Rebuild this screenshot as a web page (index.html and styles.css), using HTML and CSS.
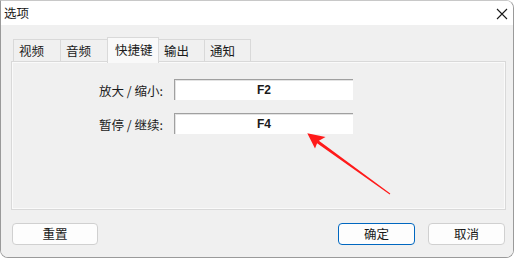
FILE: index.html
```html
<!DOCTYPE html>
<html lang="zh-CN">
<head>
<meta charset="UTF-8">
<title>选项</title>
<link rel="stylesheet" href="styles.css">
</head>
<body>
<div class="window">
    <div class="titlebar">
        <span class="title">选项</span>
        <span class="close">
            <svg width="12" height="12" viewBox="0 0 12 12"><path d="M1 1L11 11M11 1L1 11" stroke="#1a1a1a" stroke-width="1.1" fill="none"/></svg>
        </span>
    </div>
    <div class="content">
        <div class="tabs">
            <div class="tab">视频</div>
            <div class="tab">音频</div>
            <div class="tab active">快捷键</div>
            <div class="tab">输出</div>
            <div class="tab">通知</div>
        </div>
        <div class="panel">
            <div class="form">
                <label class="key-label">放大 / 缩小:</label>
                <div class="key-box">F2</div>
                <label class="key-label">暂停 / 继续:</label>
                <div class="key-box">F4</div>
            </div>
        </div>
        <div class="footer">
            <button class="btn reset">重置</button>
            <div class="right-btns">
                <button class="btn primary">确定</button>
                <button class="btn">取消</button>
            </div>
        </div>
    </div>
</div>

<svg class="arrow" width="517" height="259" viewBox="0 0 517 259">
    <polygon points="307.3,133.3 325.5,137 318.9,140.8 390.3,193.6 389.7,194.4 317.1,143.2 315,148.6" fill="#ff1a1a"/>
</svg>
</body>
</html>
```

FILE: styles.css
```css
body {
    margin: 0;
    background: #ffffff;
    font-family: "Noto Sans CJK SC", "Noto Sans", sans-serif;
    font-size: 12px;
    color: #1a1a1a;
}
.window {
    width: 514px;
    height: 258px;
    box-sizing: border-box;
    border: 1px solid #9a9a9a;
    border-top-color: #c8c8c8;
    border-radius: 0 8px 8px 8px;
    overflow: hidden;
    display: flex;
    flex-direction: column;
}
.titlebar {
    height: 24px;
    flex: none;
    background: #ffffff;
    display: flex;
    align-items: center;
    justify-content: space-between;
    padding: 0 5px 0 3px;
}
.title {
    font-size: 12.5px;
    line-height: 14px;
}
.close {
    display: flex;
    margin-top: 1px;
}
.content {
    flex: 1;
    background: #f0f0f0;
    padding: 12px 7px 11px 10px;
    display: flex;
    flex-direction: column;
}
.tabs {
    display: flex;
    height: 24px;
    align-items: flex-end;
    padding-left: 2px;
    position: relative;
    z-index: 1;
}
.tab {
    width: 48px;
    height: 22px;
    box-sizing: border-box;
    border: 1px solid #d9d9d9;
    border-bottom: none;
    margin-right: -1px;
    background: #f0f0f0;
    padding: 4px 0 0 5px;
    font-size: 12.5px;
    line-height: 14px;
}
.tab.active {
    width: 52px;
    height: 26px;
    margin: 0 -1px -2px 0;
    background: #f9f9f9;
    padding: 5px 0 0 7px;
    position: relative;
    z-index: 2;
}
.tab.active + .tab,
.tab.active + .tab + .tab {
    width: 47px;
}
.panel {
    height: 149px;
    box-sizing: border-box;
    border: 1px solid #d9d9d9;
    box-shadow: inset 0 0 0 1px #fafafa;
    background: #f0f0f0;
    padding-top: 17px;
}
.form {
    display: grid;
    grid-template-columns: 151px 179px;
    column-gap: 11px;
    row-gap: 13px;
    align-items: center;
}
.key-label {
    text-align: right;
    font-size: 12.5px;
    line-height: 14px;
    padding-top: 2px;
}
.key-box {
    height: 21px;
    box-sizing: border-box;
    background: #ffffff;
    border-top: 1px solid #a0a0a0;
    border-left: 1px solid #a0a0a0;
    box-shadow: inset 1px 1px 0 #e3e3e3;
    text-align: center;
    font-family: "Liberation Sans", Arial, sans-serif;
    font-weight: bold;
    font-size: 12px;
    line-height: 20px;
}
.footer {
    margin-top: 13px;
    display: flex;
    justify-content: space-between;
    padding: 0 1px 0 1px;
}
.right-btns {
    display: flex;
    gap: 13px;
}
.btn {
    width: 77px;
    height: 22px;
    box-sizing: border-box;
    background: #fdfdfd;
    border: 1px solid #d0d0d0;
    border-radius: 4px;
    font-family: "Noto Sans CJK SC", sans-serif;
    font-size: 12.5px;
    line-height: 14px;
    color: #1a1a1a;
    padding: 0;
}
.btn.reset {
    width: 86px;
}
.btn.primary {
    border-color: #0067c0;
}
.arrow {
    position: absolute;
    left: 0;
    top: 0;
    pointer-events: none;
}
```
